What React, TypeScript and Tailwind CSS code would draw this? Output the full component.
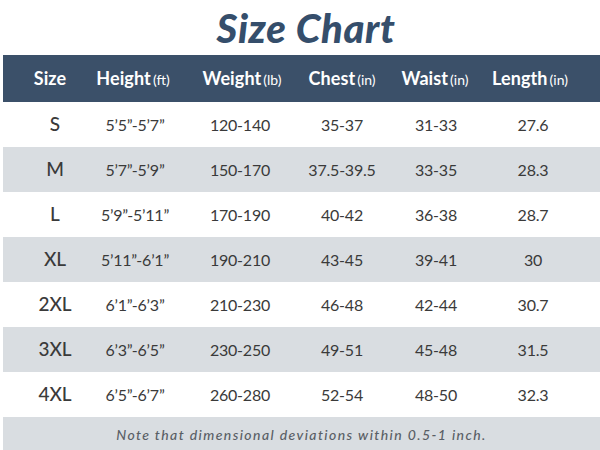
const headers = [
  { label: 'Size', unit: '' },
  { label: 'Height', unit: '(ft)' },
  { label: 'Weight', unit: '(lb)' },
  { label: 'Chest', unit: '(in)' },
  { label: 'Waist', unit: '(in)' },
  { label: 'Length', unit: '(in)' },
]

const rows = [
  ['S', '5\u20195\u201D-5\u20197\u201D', '120-140', '35-37', '31-33', '27.6'],
  ['M', '5\u20197\u201D-5\u20199\u201D', '150-170', '37.5-39.5', '33-35', '28.3'],
  ['L', '5\u20199\u201D-5\u201911\u201D', '170-190', '40-42', '36-38', '28.7'],
  ['XL', '5\u201911\u201D-6\u20191\u201D', '190-210', '43-45', '39-41', '30'],
  ['2XL', '6\u20191\u201D-6\u20193\u201D', '210-230', '46-48', '42-44', '30.7'],
  ['3XL', '6\u20193\u201D-6\u20195\u201D', '230-250', '49-51', '45-48', '31.5'],
  ['4XL', '6\u20195\u201D-6\u20197\u201D', '260-280', '52-54', '48-50', '32.3'],
]

// header cells centred at 50,133,242,342,435,530
const headWidths = ['w-[94px]', 'w-[72px]', 'w-[146px]', 'w-[54px]', 'w-[132px]', 'w-[58px]']
// body cells centred at 55,135,240,342,436,533
const bodyWidths = ['w-[104px]', 'w-[56px]', 'w-[154px]', 'w-[50px]', 'w-[138px]', 'w-[56px]']

export default function App() {
  return (
    <div className="w-[600px] h-[450px] bg-white overflow-hidden font-['Lato',sans-serif]">
      <div className="h-[55px] flex items-center justify-center pl-[12px]">
        <h1 className="text-[40px] leading-none font-black italic text-[#354e6b] tracking-[0.6px]">Size Chart</h1>
      </div>

      <div className="ml-[3px] h-[47px] bg-[#3b5069] flex items-center text-white">
        {headers.map((h, i) => (
          <div key={h.label} className={`${headWidths[i]} shrink-0 flex justify-center whitespace-nowrap items-baseline`}>
            <span className="text-[18px] font-bold tracking-[0.1px]">{h.label}</span>
            {h.unit && <span className="text-[14px] ml-[2px]">{h.unit}</span>}
          </div>
        ))}
      </div>

      {rows.map((r, ri) => (
        <div
          key={r[0]}
          className={`ml-[3px] h-[45px] flex items-center text-[#3a3a3a] ${ri % 2 === 1 ? 'bg-[#d9dde1]' : 'bg-white'}`}
        >
          {r.map((v, i) => (
            <div key={i} className={`${bodyWidths[i]} shrink-0 flex justify-center whitespace-nowrap`}>
              {i === 0 ? (
                <span className="text-[19px] font-medium">{v}</span>
              ) : (
                <span className="text-[16px] font-normal tracking-[-0.2px]">{v}</span>
              )}
            </div>
          ))}
        </div>
      ))}

      <div className="ml-[3px] h-[35px] bg-[#d9dde1] flex items-center justify-center">
        <span className="text-[14px] font-medium italic text-[#5a5f66] tracking-[1.4px]">
          Note that dimensional deviations within 0.5-1 inch.
        </span>
      </div>
    </div>
  )
}
